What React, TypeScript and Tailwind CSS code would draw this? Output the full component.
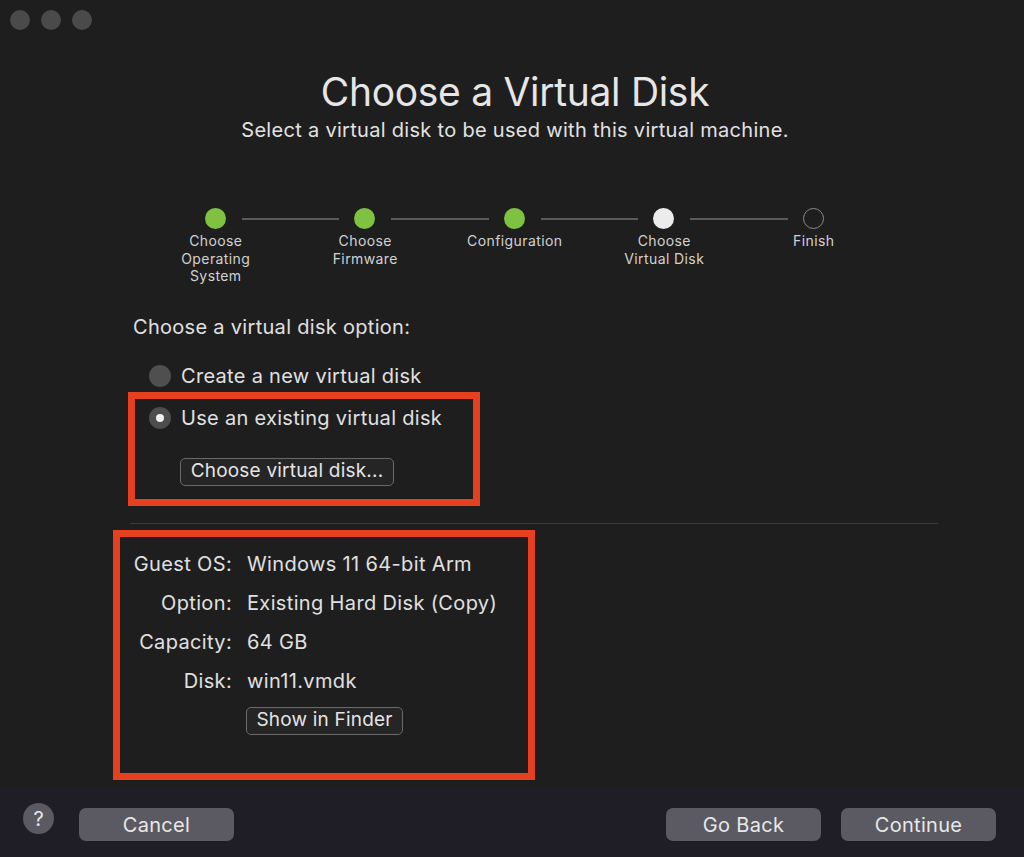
import React from "react";

const font = { fontFamily: "Inter, 'Noto Sans', sans-serif" };

function Step({ label, state, first, last }: { label: string[]; state: "done" | "current" | "todo"; first?: boolean; last?: boolean }) {
  return (
    <div className="w-[149.5px] flex flex-col items-center">
      <div className="w-full h-[21px] flex items-center">
        <div className={`flex-1 h-[2px] mr-[15px] ${first ? "" : "bg-[#5a5a5a]"}`} />
        {state === "done" && <div className="w-[21px] h-[21px] rounded-full bg-[#7fc241] shrink-0" />}
        {state === "current" && <div className="w-[21px] h-[21px] rounded-full bg-[#ececec] shrink-0" />}
        {state === "todo" && <div className="w-[21px] h-[21px] rounded-full border-[1.5px] border-[#8a8a8a] shrink-0" />}
        <div className={`flex-1 h-[2px] ml-[16px] ${last ? "" : "bg-[#5a5a5a]"}`} />
      </div>
      <div className="mt-[3px] text-[14px] leading-[17.5px] tracking-[0.4px] text-[#d2d2d2] text-center">
        {label.map((l, i) => (
          <div key={i}>{l}</div>
        ))}
      </div>
    </div>
  );
}

function FooterButton({ children, w }: { children: React.ReactNode; w: string }) {
  return (
    <div className={`${w} h-[33px] rounded-[7px] bg-[#5b5a62] flex items-center justify-center text-[20px] tracking-[0.3px] text-[#e8e8e8]`}>
      {children}
    </div>
  );
}

export default function App() {
  return (
    <div className="w-[1024px] h-[857px] bg-[#1e1e1e] flex flex-col overflow-hidden" style={font}>
      <div className="flex-1 flex flex-col">
        {/* traffic lights */}
        <div className="flex gap-[11px] pl-[10px] pt-[10px]">
          <div className="w-[20px] h-[20px] rounded-full bg-[#4a4a4a]" />
          <div className="w-[20px] h-[20px] rounded-full bg-[#4a4a4a]" />
          <div className="w-[20px] h-[20px] rounded-full bg-[#4a4a4a]" />
        </div>

        {/* title */}
        <div className="mt-[40px] flex flex-col items-center pl-[6px]">
          <div className="text-[39px] leading-[44px] text-[#e6e6e6] tracking-[-0.3px]">Choose a Virtual Disk</div>
          <div className="mt-[5px] text-[20px] leading-[22px] tracking-[0.3px] text-[#e2e2e2]">Select a virtual disk to be used with this virtual machine.</div>
        </div>

        {/* steps */}
        <div className="mt-[67px] ml-[141px] flex">
          <Step label={["Choose", "Operating", "System"]} state="done" first />
          <Step label={["Choose", "Firmware"]} state="done" />
          <Step label={["Configuration"]} state="done" />
          <Step label={["Choose", "Virtual Disk"]} state="current" />
          <Step label={["Finish"]} state="todo" last />
        </div>

        {/* options */}
        <div className="ml-[128px] w-[810px] flex flex-col mt-[31px]">
          <div className="pl-[5px] text-[20px] leading-[22px] tracking-[0.3px] text-[#e0e0e0]">Choose a virtual disk option:</div>

          <div className="mt-[26px] pl-[21px] flex items-center gap-[10px] h-[24px]">
            <div className="w-[22px] h-[22px] rounded-full bg-[#4f4f4f] shrink-0" />
            <div className="text-[20px] tracking-[0.3px] text-[#e0e0e0]">Create a new virtual disk</div>
          </div>

          <div className="mt-[4px] w-[352px] h-[114px] border-[7px] border-[#e5401f] flex flex-col">
            <div className="mt-[7px] pl-[14px] flex items-center gap-[10px] h-[24px]">
              <div className="w-[22px] h-[22px] rounded-full bg-[#4d4d4d] flex items-center justify-center shrink-0">
                <div className="w-[8px] h-[8px] rounded-full bg-[#f0f0f0]" />
              </div>
              <div className="text-[20px] tracking-[0.3px] text-[#e0e0e0]">Use an existing virtual disk</div>
            </div>
            <div className="mt-[28px] ml-[45px] w-[214px] h-[28px] rounded-[5px] border border-[#6a6a6a] bg-[#252525] flex items-center justify-center text-[19px] tracking-[0.2px] text-[#e4e4e4]">
              Choose virtual disk...
            </div>
          </div>

          <div className="mt-[17px] ml-[2px] h-[1px] bg-[#3a3a3a]" />

          <div className="mt-[6px] ml-[-15px] w-[422px] h-[250px] border-[7px] border-[#e5401f] pt-[15px]">
            <div className="grid grid-cols-[112px_1fr] gap-x-[15px] gap-y-[15px] text-[20px] leading-[24px] tracking-[0.35px] text-[#e0e0e0]">
              <div className="text-right">Guest OS:</div>
              <div>Windows 11 64-bit Arm</div>
              <div className="text-right">Option:</div>
              <div>Existing Hard Disk (Copy)</div>
              <div className="text-right">Capacity:</div>
              <div>64 GB</div>
              <div className="text-right">Disk:</div>
              <div>win11.vmdk</div>
            </div>
            <div className="mt-[14px] ml-[126px] w-[157px] h-[28px] rounded-[5px] border border-[#6a6a6a] bg-[#252525] flex items-center justify-center text-[19px] tracking-[0.2px] text-[#e4e4e4]">
              Show in Finder
            </div>
          </div>
        </div>
      </div>

      {/* footer */}
      <div className="h-[70px] bg-[#1f1d26] flex items-start pl-[23px] pr-[28px]">
        <div className="mt-[16px] w-[31px] h-[31px] rounded-full bg-[#5b5a62] flex items-center justify-center text-[20px] text-[#e8e8e8]">?</div>
        <div className="mt-[21px] ml-[25px]">
          <FooterButton w="w-[155px]">Cancel</FooterButton>
        </div>
        <div className="flex-1" />
        <div className="mt-[21px] flex gap-[20px]">
          <FooterButton w="w-[155px]">Go Back</FooterButton>
          <FooterButton w="w-[155px]">Continue</FooterButton>
        </div>
      </div>
    </div>
  );
}
